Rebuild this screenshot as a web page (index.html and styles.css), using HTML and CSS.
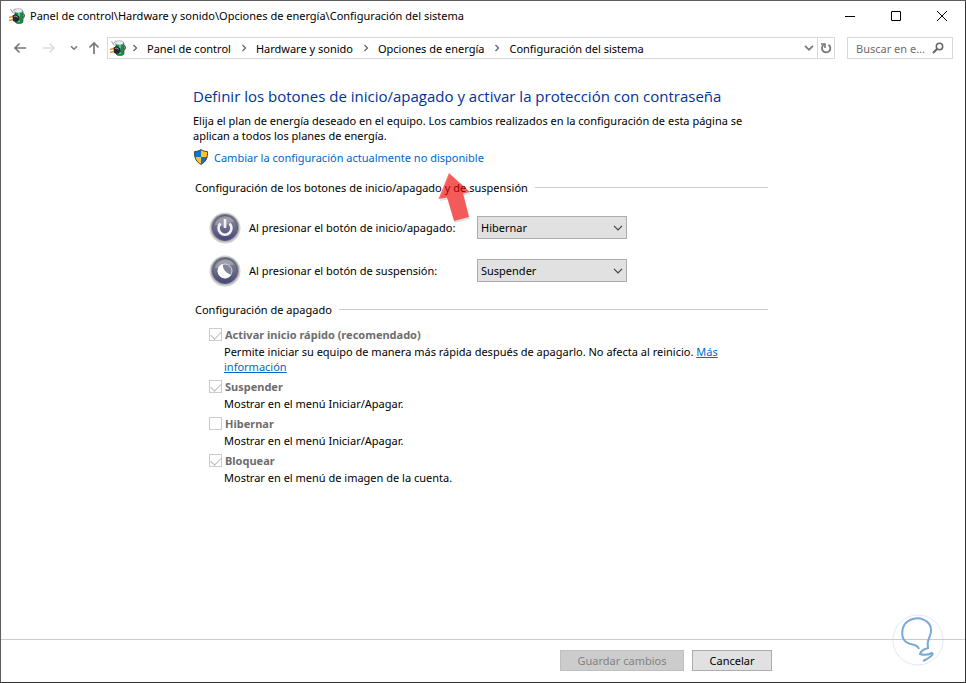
FILE: index.html
```html
<!DOCTYPE html>
<html lang="es">
<head>
<meta charset="utf-8">
<title>Configuración del sistema</title>
<link rel="stylesheet" href="styles.css">
</head>
<body>
<svg class="defs" aria-hidden="true">
  <defs>
    <symbol id="battery" viewBox="0 0 16 16">
      <path d="M6 3.500Q6 1.500 10 1.500t4 2v10q0 2-4 2t-4-2z" fill="#08983f" stroke="#314237" stroke-width=".6"/>
      <path d="M9 5h2v9H9z" fill="#3fd67a"/>
      <ellipse cx="9.500" cy="2.800" rx="4" ry="2.200" fill="#e9ebf0" stroke="#8a8f98" stroke-width=".5"/>
      <path d="M1.500 1l1.500 3 3-3.500M3 4l3 2" fill="none" stroke="#a0a6b2" stroke-width="1"/>
      <path d="M12 5.500q3.500 0 3.300 2.500-1 3-5 3.500" fill="none" stroke="#5c6265" stroke-width="1.500"/>
      <path d="M0 9.500l4-1M0 12.500l4-1" stroke="#e8913a" stroke-width="1.600"/>
      <path d="M3.500 7.500l3-1.500 4 2.500v3.500L7 14l-3-1z" fill="#25282c"/>
      <path d="M5 8.500l2-.5 2 1.500" fill="none" stroke="#969ba0"/>
    </symbol>
    <symbol id="crumb" viewBox="0 0 6 8"><path d="M1.500 1l3 3-3 3" fill="none" stroke="#666" stroke-width="1.300"/></symbol>
    <symbol id="down" viewBox="0 0 10 6"><path d="M1 .8l4 4 4-4" fill="none" stroke="currentColor" stroke-width="1.200"/></symbol>
    <linearGradient id="face" x2="0" y2="1">
      <stop offset="0" stop-color="#8c8c98"/><stop offset=".5" stop-color="#6b6b8c"/><stop offset="1" stop-color="#45457a"/>
    </linearGradient>
    <linearGradient id="rim" x2="0" y2="1"><stop stop-color="#77777e"/><stop offset="1" stop-color="#b6b6bc"/></linearGradient>
    <symbol id="knob" viewBox="0 0 32 32">
      <circle cx="16" cy="16" r="15.500" fill="#d2d2d5"/>
      <circle cx="16" cy="16" r="14" fill="url(#rim)"/>
      <circle cx="16" cy="16" r="12.500" fill="url(#face)" stroke="#5c5b74"/>
      <path d="M6 13q2-8 11-8 6 0 8 5-4-1-6 2t-7 2-6-1z" fill="#bcbcc4" opacity=".5"/>
    </symbol>
  </defs>
</svg>
<div class="window">
  <header class="titlebar">
    <svg class="app-icon"><use href="#battery"/></svg>
    <span class="caption">Panel de control\Hardware y sonido\Opciones de energía\Configuración del sistema</span>
    <div class="window-buttons">
      <button type="button" aria-label="Minimizar"><svg viewBox="0 0 12 12"><path d="M1 6.500h10" stroke="#000"/></svg></button>
      <button type="button" aria-label="Maximizar"><svg viewBox="0 0 12 12"><path d="M1.500 1.500h9v9h-9z" fill="none" stroke="#000"/></svg></button>
      <button type="button" aria-label="Cerrar"><svg viewBox="0 0 12 12"><path d="M1 1l10 10M11 1L1 11" stroke="#000"/></svg></button>
    </div>
  </header>
  <nav class="toolbar" aria-label="Navegación">
    <div class="history">
      <button type="button" aria-label="Atrás"><svg width="14" height="12" viewBox="0 0 14 12"><path d="M13 6H2M6.500 1.500L2 6l4.500 4.500" fill="none" stroke="#777" stroke-width="1.700"/></svg></button>
      <button type="button" aria-label="Adelante" disabled><svg width="14" height="12" viewBox="0 0 14 12"><path d="M1 6h11M7.500 1.500L12 6l-4.500 4.500" fill="none" stroke="#ddd" stroke-width="1.700"/></svg></button>
      <button type="button" class="recent" aria-label="Ubicaciones recientes"><svg width="8" height="6" viewBox="0 0 8 6"><path d="M1 1.200l3 3 3-3" fill="none" stroke="#777" stroke-width="1.500"/></svg></button>
      <button type="button" class="up" aria-label="Subir"><svg width="12" height="14" viewBox="0 0 12 14"><path d="M6 13V2M1.500 6.500L6 2l4.500 4.500" fill="none" stroke="#777" stroke-width="1.700"/></svg></button>
    </div>
    <div class="address">
      <svg class="app-icon"><use href="#battery"/></svg>
      <svg class="crumb"><use href="#crumb"/></svg><a href="#">Panel de control</a>
      <svg class="crumb"><use href="#crumb"/></svg><a href="#">Hardware y sonido</a>
      <svg class="crumb"><use href="#crumb"/></svg><a href="#">Opciones de energía</a>
      <svg class="crumb"><use href="#crumb"/></svg><a href="#">Configuración del sistema</a>
      <button type="button" class="expand" aria-label="Ubicaciones anteriores"><svg width="10" height="6" viewBox="0 0 10 6"><path d="M1 .8l4 4 4-4" fill="none" stroke="#777" stroke-width="1.700"/></svg></button>
      <button type="button" class="refresh" aria-label="Actualizar"><svg width="12" height="12" viewBox="0 0 12 12"><path d="M3.500 3A4.200 4.200 0 1 0 8.500 2.800" fill="none" stroke="#777" stroke-width="1.800"/><path d="M1 2h4v4" fill="none" stroke="#777" stroke-width="1.600"/></svg></button>
    </div>
    <div class="search">
      <input type="text" placeholder="Buscar en e..." aria-label="Buscar en el Panel de control">
      <svg width="12" height="12" viewBox="0 0 12 12"><circle cx="7.500" cy="4.500" r="3.200" fill="none" stroke="#666" stroke-width="1.500"/><path d="M5.300 6.800L1 11" stroke="#666" stroke-width="2"/></svg>
    </div>
  </nav>
  <main>
    <h1>Definir los botones de inicio/apagado y activar la protección con contraseña</h1>
    <p class="intro">Elija el plan de energía deseado en el equipo. Los cambios realizados en la configuración de esta página se aplican a todos los planes de energía.</p>
    <a class="elevate" href="#">
      <svg width="16" height="16" viewBox="0 0 16 16"><path d="M8 .5Q5 2.500 1.500 2.500C1 9 4 13.500 8 15.500V.5z" fill="#0b73d0"/><path d="M8 .5q3 2 6.500 2C15 9 12 13.500 8 15.500z" fill="#fdc22d"/><path d="M1.500 8H8v7.500Q2.500 13 1.500 8z" fill="#fdc22d"/><path d="M8 8h6.500Q13.500 13 8 15.500z" fill="#0b73d0"/><path d="M8 .7Q5 2.600 1.500 2.600C1 9 4 13.500 8 15.300c4-1.800 7-6.300 6.500-12.700Q11 2.600 8 .7z" fill="none" stroke="#44494e"/></svg>
      <span>Cambiar la configuración actualmente no disponible</span>
    </a>
    <section class="buttons-section">
      <h2>Configuración de los botones de inicio/apagado <span class="pointed">y de<svg class="pointer" width="36" height="54" viewBox="0 0 36 54" aria-hidden="true"><path d="M12 2l21 19-7 1.500L32 46l-15 4-7-23.500L1.500 28z" fill="#000" opacity=".12" transform="translate(1 2)"/><path d="M12 2l21 19-7 1.500L32 46l-15 4-7-23.500L1.500 28z" fill="#f00" opacity=".6"/></svg></span> suspensión</h2>
      <div class="action">
        <svg class="knob" viewBox="0 0 32 32"><use href="#knob"/><path d="M11.500 11.500a6.500 6.500 0 1 0 9 0" fill="none" stroke="#f2f2f5" stroke-width="2.600"/><path d="M16 7v9" stroke="#f2f2f5" stroke-width="2.600"/></svg>
        <label for="power">Al presionar el botón de inicio/apagado:</label>
        <span class="dropdown"><select id="power"><option>Hibernar</option><option>Suspender</option></select><svg><use href="#down"/></svg></span>
      </div>
      <div class="action">
        <svg class="knob" viewBox="0 0 32 32"><use href="#knob"/><circle cx="16" cy="16" r="7" fill="#85859a" stroke="#d9d9df"/><path d="M13.500 9a7.300 7.300 0 1 0 8.500 11q-8-3-8.500-11z" fill="#fff"/></svg>
        <label for="sleep">Al presionar el botón de suspensión:</label>
        <span class="dropdown"><select id="sleep"><option>Suspender</option><option>Hibernar</option></select><svg><use href="#down"/></svg></span>
      </div>
    </section>
    <section class="shutdown-section">
      <h2>Configuración de apagado</h2>
      <div class="option">
        <label><input type="checkbox" checked disabled>Activar inicio rápido (recomendado)</label>
        <p>Permite iniciar su equipo de manera más rápida después de apagarlo. No afecta al reinicio. <a href="#">Más información</a></p>
      </div>
      <div class="option">
        <label><input type="checkbox" checked disabled>Suspender</label>
        <p>Mostrar en el menú Iniciar/Apagar.</p>
      </div>
      <div class="option">
        <label><input type="checkbox" disabled>Hibernar</label>
        <p>Mostrar en el menú Iniciar/Apagar.</p>
      </div>
      <div class="option">
        <label><input type="checkbox" checked disabled>Bloquear</label>
        <p>Mostrar en el menú de imagen de la cuenta.</p>
      </div>
    </section>
  </main>
  <footer>
    <button type="button" class="save" disabled>Guardar cambios</button>
    <button type="button" class="cancel">Cancelar</button>
    <svg class="watermark" viewBox="0 0 52 52" aria-hidden="true"><circle cx="26" cy="26" r="25" fill="#fff" stroke="#e3eaf5"/><path d="M0 25.500h52" stroke="#c4ccd2"/><path d="M27 35C25 29 19 32 14 28C8 23 9 10 18 6C27 2 38 6 39 15C40 23 34 24 36 34Q29 36 28 40Q34 42 40 39Q43 41 31 47" fill="none" stroke="#78a9d8" stroke-width="2"/></svg>
  </footer>
</div>
</body>
</html>
```
FILE: styles.css
```css
* { box-sizing: border-box; }
body {
  margin: 0;
  font: 11px/15px "Noto Sans", "Open Sans", sans-serif;
  color: #000;
  background: #fff;
}
.defs { position: absolute; width: 0; height: 0; }
h1, h2, p { margin: 0; font-weight: 400; }
button, input, select { font: inherit; }
svg { flex: none; }
.window {
  display: flex;
  flex-direction: column;
  min-height: 100vh;
  border: 1px solid #333;
  border-top-color: #5f5d60;
  border-left-color: #5f5d60;
}
.titlebar {
  display: flex;
  align-items: center;
  height: 29px;
  padding-left: 8px;
}
.app-icon { width: 16px; height: 16px; }
.caption { margin-left: 5px; }
.window-buttons { display: flex; margin-left: auto; }
.window-buttons button {
  display: grid;
  place-items: center;
  width: 46px;
  height: 29px;
  padding: 0;
  border: 0;
  background: none;
}
.window-buttons svg { width: 12px; height: 12px; }
.toolbar {
  display: flex;
  align-items: center;
  padding: 7px 12px 7px 7px;
}
.history { display: flex; align-items: center; width: 99px; }
.history button {
  display: grid;
  place-items: center;
  width: 28px;
  height: 22px;
  padding: 0;
  border: 0;
  background: none;
}
.history button:first-child { width: 24px; }
.history button:nth-child(2) { width: 34px; }
.history .recent { width: 16px; }
.history .up { width: 24px; }
.address {
  display: flex;
  flex: 1;
  align-items: center;
  min-width: 0;
  height: 22px;
  padding-left: 2px;
  border: 1px solid #d9d9d9;
}
.address a { color: inherit; text-decoration: none; white-space: nowrap; }
.crumb { width: 6px; height: 8px; margin: 0 9px 0 10px; }
.app-icon + .crumb { margin-left: 6px; }
.address button {
  display: grid;
  place-items: center;
  width: 17px;
  height: 20px;
  padding: 0;
  border: 0;
  background: none;
}
.expand { margin-left: auto; }
.address .refresh { border-left: 1px solid #d9d9d9; }
.search {
  display: flex;
  align-items: center;
  width: 106px;
  height: 22px;
  margin-left: 12px;
  padding: 0 8px;
  border: 1px solid #d9d9d9;
}
.search input {
  flex: 1;
  width: 0;
  padding: 0;
  border: 0;
  outline: 0;
  background: none;
}
.search input::placeholder { color: #6d6d6d; opacity: 1; }
main {
  flex: 1;
  width: 100%;
  max-width: 767px;
  padding: 20px 0 20px 192px;
}
h1 {
  font-family: "Open Sans", "Noto Sans", sans-serif;
  font-size: 15px;
  line-height: 20px;
  color: #003399;
  white-space: nowrap;
}
.intro { margin-top: 7px; }
.elevate {
  display: flex;
  align-items: center;
  gap: 5px;
  margin-top: 6px;
  color: #0066cc;
  text-decoration: none;
}
section { padding-left: 2px; }
h2 {
  display: flex;
  align-items: center;
  gap: 3px;
  font-size: 11px;
  line-height: 15px;
  white-space: nowrap;
}
h2::after {
  content: "";
  flex: 1;
  margin-left: 4px;
  border-top: 1px solid #ccc;
}
.buttons-section { margin-top: 15px; }
.pointed { position: relative; }
.pointer { position: absolute; top: -9px; left: -8px; }
.action {
  display: grid;
  grid-template-columns: 32px 220px 150px;
  column-gap: 8px;
  align-items: center;
  margin-left: 14px;
}
.buttons-section .action { height: 43px; }
.buttons-section h2 + .action { margin-top: 11px; }
.knob { width: 32px; height: 32px; }
.dropdown { display: grid; align-items: center; }
.dropdown select {
  grid-area: 1 / 1;
  appearance: none;
  height: 23px;
  padding: 0 20px 0 3px;
  border: 1px solid #adadad;
  border-radius: 0;
  color: #000;
  background: #e1e1e1;
}
.dropdown svg {
  grid-area: 1 / 1;
  justify-self: end;
  width: 10px;
  height: 6px;
  margin-right: 4px;
  color: #444;
  pointer-events: none;
}
.shutdown-section { margin-top: 10px; }
.shutdown-section h2 { margin-bottom: 9px; }
.option { margin: 0 0 4px 14px; }
.option label {
  display: flex;
  align-items: center;
  gap: 3px;
  height: 17px;
  color: #6d6d6d;
  font-weight: 700;
}
.option input {
  appearance: none;
  display: grid;
  place-items: center;
  width: 13px;
  height: 13px;
  margin: 0;
  border: 1px solid #ccc;
  background: #fff;
}
.option input:checked::before {
  content: "";
  width: 9px;
  height: 5px;
  margin-bottom: 2px;
  border: solid #bbb;
  border-width: 0 0 1px 1px;
  transform: rotate(-45deg);
}
.option p { margin: 1px 0 0 15px; }
.option a { color: #0066cc; }
footer {
  position: relative;
  display: flex;
  gap: 8px;
  height: 43px;
  padding: 10px 0 0 559px;
  border-top: 1px solid #ccc;
}
footer button {
  height: 21px;
  padding: 0;
  border: 1px solid #adadad;
  background: #e1e1e1;
  color: #000;
}
footer .save { width: 124px; border-color: #bfbfbf; background: #ccc; color: #838383; }
footer .cancel { width: 80px; }
.watermark { position: absolute; top: -26px; right: 21px; width: 52px; height: 52px; }
```
